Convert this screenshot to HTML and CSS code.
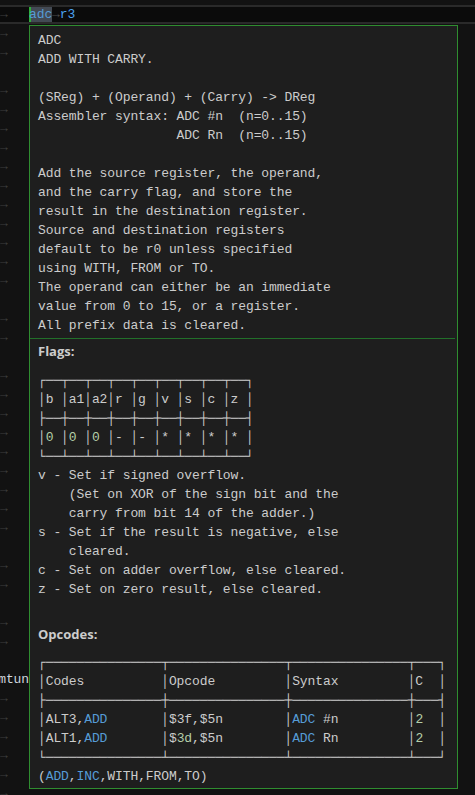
FILE: index.html
```html
<!DOCTYPE html>
<html>
<head>
<meta charset="utf-8">
<title>ADC hover</title>
<link rel="stylesheet" href="styles.css">
</head>
<body>
<div class="editor">
  <div class="ln"><span class="gut"></span><span class="code dim">add     r2</span></div>
  <div class="ln cur"><span class="gut">→</span><span class="code"><span class="sel kw">adc</span><span class="ws">→</span><span class="reg">r3</span></span></div>
  <div class="ln"><span class="gut">→</span></div>
  <div class="ln"><span class="gut">→</span></div>
  <div class="ln"><span class="gut"></span></div>
  <div class="ln"><span class="gut">→</span></div>
  <div class="ln"><span class="gut">→</span></div>
  <div class="ln"><span class="gut">→</span></div>
  <div class="ln"><span class="gut">→</span></div>
  <div class="ln"><span class="gut">→</span></div>
  <div class="ln"><span class="gut">→</span></div>
  <div class="ln"><span class="gut">→</span></div>
  <div class="ln"><span class="gut">→</span></div>
  <div class="ln"><span class="gut">→</span></div>
  <div class="ln"><span class="gut">→</span></div>
  <div class="ln"><span class="gut">→</span></div>
  <div class="ln"><span class="gut"></span></div>
  <div class="ln"><span class="gut">→</span></div>
  <div class="ln"><span class="gut">→</span></div>
  <div class="ln"><span class="gut"></span></div>
  <div class="ln"><span class="gut">→</span></div>
  <div class="ln"><span class="gut">→</span></div>
  <div class="ln"><span class="gut">→</span></div>
  <div class="ln"><span class="gut">→</span></div>
  <div class="ln"><span class="gut">→</span></div>
  <div class="ln"><span class="gut">→</span></div>
  <div class="ln"><span class="gut">→</span></div>
  <div class="ln"><span class="gut">→</span></div>
  <div class="ln"><span class="gut">→</span></div>
  <div class="ln"><span class="gut"></span></div>
  <div class="ln"><span class="gut">→</span></div>
  <div class="ln"><span class="gut">→</span></div>
  <div class="ln"><span class="gut"></span></div>
  <div class="ln"><span class="gut">→</span></div>
  <div class="ln"><span class="gut">→</span></div>
  <div class="ln"><span class="gut"></span></div>
  <div class="ln"><span class="gut txt">mtun</span></div>
  <div class="ln"><span class="gut">→</span></div>
  <div class="ln"><span class="gut">→</span></div>
  <div class="ln"><span class="gut">→</span></div>
  <div class="ln"><span class="gut">→</span></div>
  <div class="ln"><span class="gut">→</span></div>
  <div class="ln"><span class="gut">→</span></div>
  <div class="ln"><span class="gut">→</span><span class="code"><span class="kw">add</span><span class="ws">→</span><span class="reg">r3</span></span></div>
</div>

<div class="hover">
<pre class="desc">ADC
ADD WITH CARRY.

(SReg) + (Operand) + (Carry) -&gt; DReg
Assembler syntax: ADC #n  (n=0..15)
                  ADC Rn  (n=0..15)

Add the source register, the operand,
and the carry flag, and store the
result in the destination register.
Source and destination registers
default to be r0 unless specified
using WITH, FROM or TO.
The operand can either be an immediate
value from 0 to 15, or a register.
All prefix data is cleared.</pre>
<div class="sep"></div>
<div class="h">Flags:</div>
<pre class="flags">┌──┬──┬──┬──┬──┬──┬──┬──┬──┐
│b │a1│a2│r │g │v │s │c │z │
├──┼──┼──┼──┼──┼──┼──┼──┼──┤
│<span class="num">0</span> │<span class="num">0</span> │<span class="num">0</span> │- │- │* │* │* │* │
└──┴──┴──┴──┴──┴──┴──┴──┴──┘
v - Set if signed overflow.
    (Set on XOR of the sign bit and the
    carry from bit 14 of the adder.)
s - Set if the result is negative, else
    cleared.
c - Set on adder overflow, else cleared.
z - Set on zero result, else cleared.</pre>
<div class="h h2">Opcodes:</div>
<pre class="ops">┌───────────────┬───────────────┬───────────────┬───┐
│Codes          │Opcode         │Syntax         │C  │
├───────────────┼───────────────┼───────────────┼───┤
│ALT3,<span class="kw">ADD</span>       │$3f,$5n        │<span class="kw">ADC</span> #n         │<span class="num">2</span>  │
│ALT1,<span class="kw">ADD</span>       │$<span class="num">3d</span>,$5n        │<span class="kw">ADC</span> Rn         │<span class="num">2</span>  │
└───────────────┴───────────────┴───────────────┴───┘
(<span class="kw">ADD</span>,<span class="kw">INC</span>,WITH,FROM,TO)</pre>
</div>
</body>
</html>
```
FILE: styles.css
```css
* { box-sizing: border-box; }
html, body { margin: 0; padding: 0; }
body {
  width: 475px;
  height: 795px;
  overflow: hidden;
  position: relative;
  background: #121212;
  color: #cccccc;
  font-family: "Liberation Mono", "DejaVu Sans Mono", monospace;
  font-size: 13px;
  letter-spacing: -0.1px;
}
.editor {
  margin-top: -14px;
  display: flex;
  flex-direction: column;
}
.ln {
  height: 19px;
  line-height: 19px;
  display: flex;
  white-space: pre;
}
.gut {
  width: 29px;
  flex: none;
  display: flex;
  overflow: hidden;
  color: #3d3d3d;
}
.gut.txt {
  justify-content: flex-end;
  color: #d0d6de;
}
.code { color: #cccccc; }
.dim { color: #6a6a6a; }
.cur {
  background: #0b0b0b;
  border-top: 2px solid #2a2a2a;
  border-bottom: 2px solid #2a2a2a;
  line-height: 15px;
}
.sel {
  display: inline-block;
  height: 15px;
  background: #434a54;
  box-shadow: inset 2px 0 0 #2fae3a;
}
.kw { color: #569cd6; }
.reg { color: #4ba3f0; }
.ws { color: #4a4a4a; }
.num { color: #b5cea8; }

.hover {
  position: absolute;
  left: 29px;
  top: 25px;
  width: 429px;
  height: 764px;
  background: #1e1e1e;
  border: 1px solid #2f8d30;
  padding: 5px 0 0 8px;
  overflow: hidden;
}
.hover pre {
  margin: 0;
  font: inherit;
  line-height: 19px;
  white-space: pre;
}
.sep {
  height: 1px;
  background: #22702a;
  margin: 3px 2px 0 -8px;
}
.h {
  margin-top: 3px;
  font-family: "Open Sans", "Liberation Sans", sans-serif;
  font-weight: 700;
  font-size: 13px;
  line-height: 19px;
  letter-spacing: 0;
  color: #cccccc;
}
.flags { margin-top: 10px !important; }
.h2 { margin-top: 26px; }
.ops { margin-top: 9px !important; }
```
